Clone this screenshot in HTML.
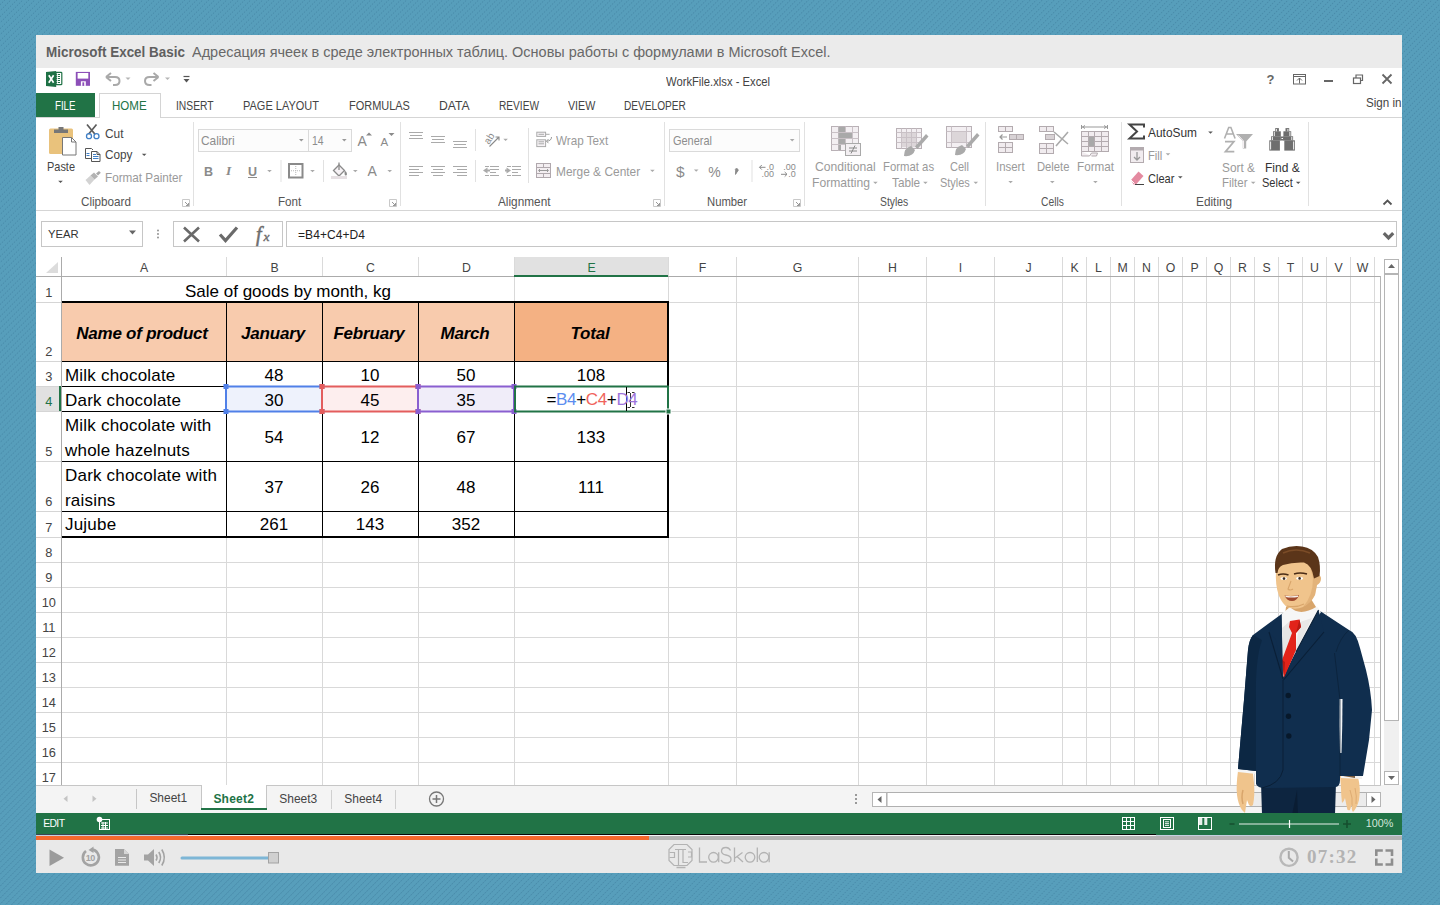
<!DOCTYPE html>
<html><head><meta charset="utf-8">
<style>
*{margin:0;padding:0;box-sizing:border-box}
html,body{width:1440px;height:905px;overflow:hidden}
body{background:repeating-linear-gradient(45deg,rgba(87,158,187,0) 0px,rgba(87,158,187,0) 1.2px,rgba(87,158,187,.85) 1.6px,rgba(87,158,187,.85) 2.5px,rgba(87,158,187,0) 2.83px),repeating-linear-gradient(135deg,#579ebb 0px,#579ebb 2.6px,#4a8cab 3.4px,#579ebb 4.24px);font-family:"Liberation Sans",sans-serif;position:relative;color:#000}
.a{position:absolute}
.t{position:absolute;white-space:nowrap;line-height:1}
svg{position:absolute;left:0;top:0;overflow:visible}
</style></head>
<body>
<!-- chrome -->
<div class="a" style="left:36px;top:35px;width:1366px;height:838px;background:#fff;"></div>
<div class="a" style="left:36px;top:35px;width:1366px;height:33px;background:#ebebeb;"></div>
<div class="t" style="top:44.00px;font-size:15.2px;color:#5f5f5f;font-weight:bold;left:46px;transform:scaleX(0.8847);transform-origin:0 0;">Microsoft Excel Basic</div>
<div class="t" style="top:44.00px;font-size:15.2px;color:#686868;left:192px;transform:scaleX(0.9526);transform-origin:0 0;">Адресация ячеек в среде электронных таблиц. Основы работы с формулами в Microsoft Excel.</div>
<div class="t" style="top:74.95px;font-size:13px;color:#444;left:666px;transform:scaleX(0.8639);transform-origin:0 0;">WorkFile.xlsx - Excel</div>
<div class="a" style="left:1360px;top:90px;width:42px;height:25px;overflow:hidden"><div class="t" style="top:7.28px;font-size:12.8px;color:#444;left:6px;transform:scaleX(0.9071);transform-origin:0 0;">Sign in</div>
</div><div class="a" style="left:36px;top:93px;width:59px;height:24px;background:#217346;"></div>
<div class="a" style="left:99px;top:93px;width:62px;height:25px;background:#fff;border:1px solid #d4d4d4;border-bottom:none;"></div>
<div class="t" style="top:99.31px;font-size:13.2px;color:#fff;left:55.2px;transform:scaleX(0.7354);transform-origin:0 0;">FILE</div>
<div class="t" style="top:99.31px;font-size:13.2px;color:#217346;left:112px;transform:scaleX(0.8763);transform-origin:0 0;">HOME</div>
<div class="t" style="top:99.31px;font-size:13.2px;color:#444;left:175.6px;transform:scaleX(0.7806);transform-origin:0 0;">INSERT</div>
<div class="t" style="top:99.31px;font-size:13.2px;color:#444;left:243.3px;transform:scaleX(0.8333);transform-origin:0 0;">PAGE LAYOUT</div>
<div class="t" style="top:99.31px;font-size:13.2px;color:#444;left:349px;transform:scaleX(0.8317);transform-origin:0 0;">FORMULAS</div>
<div class="t" style="top:99.31px;font-size:13.2px;color:#444;left:439.3px;transform:scaleX(0.9234);transform-origin:0 0;">DATA</div>
<div class="t" style="top:99.31px;font-size:13.2px;color:#444;left:499px;transform:scaleX(0.7681);transform-origin:0 0;">REVIEW</div>
<div class="t" style="top:99.31px;font-size:13.2px;color:#444;left:567.7px;transform:scaleX(0.8092);transform-origin:0 0;">VIEW</div>
<div class="t" style="top:99.31px;font-size:13.2px;color:#444;left:624px;transform:scaleX(0.7683);transform-origin:0 0;">DEVELOPER</div>
<div class="a" style="left:36px;top:117px;width:63px;height:1px;background:#d5d5d5;"></div>
<div class="a" style="left:161px;top:117px;width:1241px;height:1px;background:#d5d5d5;"></div>
<div class="a" style="left:36px;top:210px;width:1366px;height:1px;background:#d5d5d5;"></div>
<svg width="1440" height="120">
<g>
 <rect x="56" y="72.3" width="5.8" height="12.4" rx=".8" fill="#fff" stroke="#1e7145" stroke-width="1.2"/>
 <path d="M58 74.5h2M58 76.5h2M58 78.5h2M58 80.5h2M58 82.5h2" stroke="#1e7145" stroke-width="1.1"/>
 <path d="M46 71.9 L56.2 71 L56.2 86.9 L46 85.9 Z" fill="#1e7145"/>
 <path d="M56.2 74.5h1M56.2 76.5h1M56.2 78.5h1M56.2 80.5h1M56.2 82.5h1" stroke="#1e7145" stroke-width="1.1"/>
 <path d="M48.8 75.3 L53.6 82.7 M53.6 75.3 L48.8 82.7" stroke="#fff" stroke-width="1.7"/>
 <rect x="75.8" y="71.9" width="14.2" height="13.9" fill="#8c4fb8"/>
 <rect x="77.6" y="73" width="10.7" height="5.6" fill="#fff"/>
 <rect x="80.9" y="81.3" width="4.9" height="4.6" fill="#fff"/>
 <rect x="82.4" y="82.3" width="1.8" height="3.6" fill="#8c4fb8"/>
 <path d="M106 77 L111 73 M106 77 L111 81 M106 77 H115 Q119.5 77 119.5 81 Q119.5 85 115 85 H113" fill="none" stroke="#a9a9a9" stroke-width="2"/>
 <path d="M125.5 77.5h5l-2.5 2.5z" fill="#b5b5b5"/>
 <path d="M158.5 77 L153.5 73 M158.5 77 L153.5 81 M158.5 77 H149.5 Q145 77 145 81 Q145 85 149.5 85 H151.5" fill="none" stroke="#a9a9a9" stroke-width="2"/>
 <path d="M165 77.5h5l-2.5 2.5z" fill="#b5b5b5"/>
 <path d="M183.5 76.5h6" stroke="#555" stroke-width="1.2"/>
 <path d="M183.5 79h6l-3 3.5z" fill="#555"/>
</g>
<g fill="none" stroke="#666" stroke-width="1.5">
 <text x="1266.5" y="84" font-size="13" font-weight="bold" fill="#666" stroke="none" font-family="Liberation Sans">?</text>
 <rect x="1293.5" y="74.5" width="12" height="9.5" stroke-width="1"/>
 <path d="M1293.5 76.5h12" stroke-width="1"/>
 <path d="M1299.5 83.5v-5.5M1297 80.5l2.5-2.5 2.5 2.5" stroke-width="1"/>
 <path d="M1324 81h9" stroke-width="2"/>
 <rect x="1353.5" y="78" width="7" height="5.5" stroke-width="1.2"/>
 <path d="M1356 78v-3h6.5v5.5h-2" stroke-width="1.2"/>
 <path d="M1382.5 74.5l9 9M1391.5 74.5l-9 9" stroke-width="1.8"/>
</g>
</svg>
<!-- ribbon -->
<div class="a" style="left:193px;top:122px;width:1px;height:84px;background:#e1e1e1;"></div>
<div class="a" style="left:400px;top:122px;width:1px;height:84px;background:#e1e1e1;"></div>
<div class="a" style="left:664px;top:122px;width:1px;height:84px;background:#e1e1e1;"></div>
<div class="a" style="left:804px;top:122px;width:1px;height:84px;background:#e1e1e1;"></div>
<div class="a" style="left:985px;top:122px;width:1px;height:84px;background:#e1e1e1;"></div>
<div class="a" style="left:1121px;top:122px;width:1px;height:84px;background:#e1e1e1;"></div>
<div class="a" style="left:1308px;top:122px;width:1px;height:84px;background:#e1e1e1;"></div>
<div class="t" style="top:196.18px;font-size:12.8px;color:#555;left:81.4px;transform:scaleX(0.9127);transform-origin:0 0;">Clipboard</div>
<div class="t" style="top:196.18px;font-size:12.8px;color:#555;left:277.5px;transform:scaleX(0.9098);transform-origin:0 0;">Font</div>
<div class="t" style="top:196.18px;font-size:12.8px;color:#555;left:498.2px;transform:scaleX(0.9224);transform-origin:0 0;">Alignment</div>
<div class="t" style="top:196.18px;font-size:12.8px;color:#555;left:706.5px;transform:scaleX(0.8809);transform-origin:0 0;">Number</div>
<div class="t" style="top:196.18px;font-size:12.8px;color:#555;left:880.4px;transform:scaleX(0.8090);transform-origin:0 0;">Styles</div>
<div class="t" style="top:196.18px;font-size:12.8px;color:#555;left:1041.4px;transform:scaleX(0.8049);transform-origin:0 0;">Cells</div>
<div class="t" style="top:196.18px;font-size:12.8px;color:#555;left:1196.4px;transform:scaleX(0.9250);transform-origin:0 0;">Editing</div>
<div class="t" style="top:161.18px;font-size:12.8px;color:#444;left:47px;transform:scaleX(0.8555);transform-origin:0 0;">Paste</div>
<div class="t" style="top:128.18px;font-size:12.8px;color:#444;left:104.5px;transform:scaleX(0.9288);transform-origin:0 0;">Cut</div>
<div class="t" style="top:148.98px;font-size:12.8px;color:#444;left:104.5px;transform:scaleX(0.9203);transform-origin:0 0;">Copy</div>
<div class="t" style="top:171.98px;font-size:12.8px;color:#9a9a9a;left:104.5px;transform:scaleX(0.9156);transform-origin:0 0;">Format Painter</div>
<div class="a" style="left:198px;top:129px;width:111px;height:23px;background:#fcfcfc;border:1px solid #dadada;"></div>
<div class="a" style="left:308px;top:129px;width:44px;height:23px;background:#fcfcfc;border:1px solid #dadada;"></div>
<div class="t" style="top:134.58px;font-size:12.8px;color:#8d8d8d;left:201.3px;transform:scaleX(0.9290);transform-origin:0 0;">Calibri</div>
<div class="t" style="top:134.58px;font-size:12.8px;color:#8d8d8d;left:311.7px;transform:scaleX(0.8148);transform-origin:0 0;">14</div>
<div class="t" style="top:135.18px;font-size:12.8px;color:#9a9a9a;left:555.5px;transform:scaleX(0.9134);transform-origin:0 0;">Wrap Text</div>
<div class="t" style="top:166.28px;font-size:12.8px;color:#9a9a9a;left:555.5px;transform:scaleX(0.9320);transform-origin:0 0;">Merge &amp; Center</div>
<div class="a" style="left:669px;top:129px;width:131px;height:23px;background:#fcfcfc;border:1px solid #dadada;"></div>
<div class="t" style="top:134.78px;font-size:12.8px;color:#8d8d8d;left:672.6px;transform:scaleX(0.8565);transform-origin:0 0;">General</div>
<div class="t" style="top:160.78px;font-size:12.8px;color:#9a9a9a;left:814.7px;transform:scaleX(0.9478);transform-origin:0 0;">Conditional</div>
<div class="t" style="top:176.78px;font-size:12.8px;color:#9a9a9a;left:811.7px;transform:scaleX(0.9482);transform-origin:0 0;">Formatting</div>
<div class="t" style="top:160.78px;font-size:12.8px;color:#9a9a9a;left:883.4px;transform:scaleX(0.8870);transform-origin:0 0;">Format as</div>
<div class="t" style="top:176.78px;font-size:12.8px;color:#9a9a9a;left:891.9px;transform:scaleX(0.9184);transform-origin:0 0;">Table</div>
<div class="t" style="top:160.78px;font-size:12.8px;color:#9a9a9a;left:949.9px;transform:scaleX(0.8617);transform-origin:0 0;">Cell</div>
<div class="t" style="top:176.78px;font-size:12.8px;color:#9a9a9a;left:940px;transform:scaleX(0.8549);transform-origin:0 0;">Styles</div>
<div class="t" style="top:161.18px;font-size:12.8px;color:#9a9a9a;left:996px;transform:scaleX(0.8935);transform-origin:0 0;">Insert</div>
<div class="t" style="top:161.18px;font-size:12.8px;color:#9a9a9a;left:1036.5px;transform:scaleX(0.8784);transform-origin:0 0;">Delete</div>
<div class="t" style="top:161.18px;font-size:12.8px;color:#9a9a9a;left:1076.6px;transform:scaleX(0.9153);transform-origin:0 0;">Format</div>
<div class="t" style="top:127.48px;font-size:12.8px;color:#333;left:1148.4px;transform:scaleX(0.9307);transform-origin:0 0;">AutoSum</div>
<div class="t" style="top:150.28px;font-size:12.8px;color:#9a9a9a;left:1148.4px;transform:scaleX(0.8746);transform-origin:0 0;">Fill</div>
<div class="t" style="top:172.78px;font-size:12.8px;color:#333;left:1148.4px;transform:scaleX(0.8631);transform-origin:0 0;">Clear</div>
<div class="t" style="top:161.78px;font-size:12.8px;color:#9a9a9a;left:1222.2px;transform:scaleX(0.9250);transform-origin:0 0;">Sort &amp;</div>
<div class="t" style="top:177.28px;font-size:12.8px;color:#9a9a9a;left:1222.2px;transform:scaleX(0.8966);transform-origin:0 0;">Filter</div>
<div class="t" style="top:161.78px;font-size:12.8px;color:#333;left:1264.5px;transform:scaleX(0.9380);transform-origin:0 0;">Find &amp;</div>
<div class="t" style="top:177.28px;font-size:12.8px;color:#333;left:1262px;transform:scaleX(0.8630);transform-origin:0 0;">Select</div>
<svg width="1440" height="220">
<path d="M58.2 180.8h4.6l-2.3 2.3z" fill="#555"/><path d="M141.89999999999998 153.8h4.6l-2.3 2.3z" fill="#555"/><path d="M299.0 139.10000000000002h4.6l-2.3 2.3z" fill="#999"/><path d="M342.0 139.10000000000002h4.6l-2.3 2.3z" fill="#999"/><path d="M267.2 170.0h4.6l-2.3 2.3z" fill="#aaa"/><path d="M310.2 170.0h4.6l-2.3 2.3z" fill="#aaa"/><path d="M353.0 170.0h4.6l-2.3 2.3z" fill="#aaa"/><path d="M387.4 170.0h4.6l-2.3 2.3z" fill="#aaa"/><path d="M503.3 138.8h4.6l-2.3 2.3z" fill="#aaa"/><path d="M650.1 169.8h4.6l-2.3 2.3z" fill="#aaa"/><path d="M789.9000000000001 139.10000000000002h4.6l-2.3 2.3z" fill="#aaa"/><path d="M693.9000000000001 169.5h4.6l-2.3 2.3z" fill="#aaa"/><path d="M873.1 181.8h4.6l-2.3 2.3z" fill="#aaa"/><path d="M923.1 181.8h4.6l-2.3 2.3z" fill="#aaa"/><path d="M973.5 181.8h4.6l-2.3 2.3z" fill="#aaa"/><path d="M1008.3000000000001 181.0h4.6l-2.3 2.3z" fill="#aaa"/><path d="M1050.0 181.0h4.6l-2.3 2.3z" fill="#aaa"/><path d="M1093.1000000000001 181.0h4.6l-2.3 2.3z" fill="#aaa"/><path d="M1208.2 131.4h4.6l-2.3 2.3z" fill="#555"/><path d="M1165.7 153.3h4.6l-2.3 2.3z" fill="#aaa"/><path d="M1178.0 176.3h4.6l-2.3 2.3z" fill="#555"/><path d="M1250.9 181.8h4.6l-2.3 2.3z" fill="#aaa"/><path d="M1295.9 181.8h4.6l-2.3 2.3z" fill="#555"/><path d="M182.5 206.5v-7h7v7z" fill="none" stroke="#c9c9c9" stroke-width="1"/><path d="M185 202l3.5 3.5M188.5 203v2.5h-2.5" stroke="#999" stroke-width="1" fill="none"/><path d="M389.5 206.5v-7h7v7z" fill="none" stroke="#c9c9c9" stroke-width="1"/><path d="M392 202l3.5 3.5M395.5 203v2.5h-2.5" stroke="#999" stroke-width="1" fill="none"/><path d="M653.5 206.5v-7h7v7z" fill="none" stroke="#c9c9c9" stroke-width="1"/><path d="M656 202l3.5 3.5M659.5 203v2.5h-2.5" stroke="#999" stroke-width="1" fill="none"/><path d="M793.5 206.5v-7h7v7z" fill="none" stroke="#c9c9c9" stroke-width="1"/><path d="M796 202l3.5 3.5M799.5 203v2.5h-2.5" stroke="#999" stroke-width="1" fill="none"/><path d="M1383.5 204.5l4-4 4 4" fill="none" stroke="#555" stroke-width="1.8"/><rect x="49" y="128.5" width="24" height="25.5" rx="1.5" fill="#e9c27c"/><path d="M54 133h14v-3.5h-4.5v-2.5h-5v2.5h-4.5z" fill="#777"/><path d="M62.5 137.5h9l4.5 4.5v13h-13.5z" fill="#fff" stroke="#777" stroke-width="1"/><path d="M71.5 137.5v4.5h4.5" fill="none" stroke="#777" stroke-width="1"/><path d="M87 124.5l8 9.8M96.5 124.5l-8 9.8" stroke="#5c5c5c" stroke-width="1.7"/><circle cx="89" cy="136.2" r="2.5" fill="none" stroke="#3f7fc6" stroke-width="1.3"/><circle cx="96.5" cy="136.2" r="2.5" fill="none" stroke="#3f7fc6" stroke-width="1.3"/><path d="M91.5 158.5h-6v-10h6l1.5 1.5" fill="none" stroke="#555" stroke-width="1"/><path d="M86.5 153.5h3M86.5 155.5h3" stroke="#3f7fc6" stroke-width="1"/><path d="M91.5 151.5h5.5l3 3v7h-8.5z" fill="#fff" stroke="#555" stroke-width="1"/><path d="M97 151.5v3h3" fill="none" stroke="#555" stroke-width="1"/><path d="M93 154.5h3M93 156.5h5.5M93 158.5h5.5" stroke="#3f7fc6" stroke-width="1"/><path d="M85.5 180l5-4.5 4 4 -5 5.5z" fill="#d3d3d3"/><path d="M90.5 175.5l3.5-3 4 4-3.5 3z" fill="#b3b3b3"/><path d="M96 173.5l3-2.5 1.8 1.8-2.8 2.7z" fill="#a8a8a8"/><text x="357.5" y="146" font-size="14" fill="#8a8a8a" font-family="Liberation Sans">A</text><path d="M366 135.5l3-3 3 3z" fill="#8a8a8a"/><text x="380.5" y="146" font-size="11.5" fill="#8a8a8a" font-family="Liberation Sans">A</text><path d="M388.5 133l3 3 3-3z" fill="#8a8a8a"/><text x="204" y="175.5" font-size="12.5" font-weight="bold" fill="#8a8a8a" font-family="Liberation Sans">B</text><text x="226" y="175.3" font-size="13.5" font-style="italic" font-weight="bold" fill="#8a8a8a" font-family="Liberation Serif">I</text><text x="248" y="175.5" font-size="12.5" font-weight="bold" fill="#8a8a8a" font-family="Liberation Sans">U</text><path d="M248 177.5h9" stroke="#8a8a8a" stroke-width="1"/><rect x="280.5" y="160" width="1" height="22" fill="#e1e1e1"/><rect x="323" y="160" width="1" height="22" fill="#e1e1e1"/><rect x="289" y="164" width="13.5" height="13.5" fill="none" stroke="#8a8a8a" stroke-width="2"/><path d="M295.75 166v10M291 170.75h10" stroke="#b8b8b8" stroke-width="1" stroke-dasharray="1 1"/><path d="M333.5 170.5l5.5-5.5 5.5 5.5-5.5 5.5z" fill="#f6f2f5" stroke="#8a8a8a" stroke-width="1.3"/><path d="M339 170v-7.5" stroke="#8a8a8a" stroke-width="1.3"/><path d="M344.5 170.5q2.5 1 2.5 3.5q0 1.5 -1.2 1.5q-1.2 0 -1.2-1.5z" fill="#8a8a8a"/><rect x="331" y="176" width="16" height="3" fill="#e6e0e3"/><text x="367.5" y="175.5" font-size="14" fill="#8a8a8a" font-family="Liberation Sans">A</text><path d="M409 132.5h14" stroke="#aaa" stroke-width="1"/><path d="M410 135.5h12" stroke="#aaa" stroke-width="1"/><path d="M409 138.5h14" stroke="#aaa" stroke-width="1"/><path d="M431 136.5h14" stroke="#aaa" stroke-width="1"/><path d="M432 139.5h12" stroke="#aaa" stroke-width="1"/><path d="M431 142.5h14" stroke="#aaa" stroke-width="1"/><path d="M453 141.5h14" stroke="#aaa" stroke-width="1"/><path d="M454 144.5h12" stroke="#aaa" stroke-width="1"/><path d="M453 147.5h14" stroke="#aaa" stroke-width="1"/><path d="M409 166.5h14" stroke="#aaa" stroke-width="1"/><path d="M409 169.5h10" stroke="#aaa" stroke-width="1"/><path d="M409 172.5h14" stroke="#aaa" stroke-width="1"/><path d="M409 175.5h10" stroke="#aaa" stroke-width="1"/><path d="M431 166.5h14" stroke="#aaa" stroke-width="1"/><path d="M433 169.5h10" stroke="#aaa" stroke-width="1"/><path d="M431 172.5h14" stroke="#aaa" stroke-width="1"/><path d="M433 175.5h10" stroke="#aaa" stroke-width="1"/><path d="M453 166.5h14" stroke="#aaa" stroke-width="1"/><path d="M457 169.5h10" stroke="#aaa" stroke-width="1"/><path d="M453 172.5h14" stroke="#aaa" stroke-width="1"/><path d="M457 175.5h10" stroke="#aaa" stroke-width="1"/><rect x="475" y="129" width="1" height="22" fill="#e1e1e1"/><rect x="475" y="160" width="1" height="22" fill="#e1e1e1"/><rect x="528" y="128" width="1" height="55" fill="#e1e1e1"/><text x="0" y="0" font-size="10" fill="#8a8a8a" font-family="Liberation Sans" transform="translate(489 145) rotate(-58)">ab</text><path d="M489.5 146.5l9-9M495.5 137h3.5v3.5" stroke="#8a8a8a" stroke-width="1.1" fill="none"/><path d="M485 166.5h4" stroke="#aaa" stroke-width="1"/><path d="M485 175.5h4" stroke="#aaa" stroke-width="1"/><path d="M490 166.5h9" stroke="#aaa" stroke-width="1"/><path d="M490 169.5h9" stroke="#aaa" stroke-width="1"/><path d="M490 172.5h6" stroke="#aaa" stroke-width="1"/><path d="M490 175.5h9" stroke="#aaa" stroke-width="1"/><path d="M483 170.5l4.5-3v6z" fill="#aaa"/><path d="M487 170.5h3" stroke="#aaa" stroke-width="2"/><path d="M507 166.5h4" stroke="#aaa" stroke-width="1"/><path d="M507 175.5h4" stroke="#aaa" stroke-width="1"/><path d="M512 166.5h9" stroke="#aaa" stroke-width="1"/><path d="M512 169.5h9" stroke="#aaa" stroke-width="1"/><path d="M512 172.5h6" stroke="#aaa" stroke-width="1"/><path d="M512 175.5h9" stroke="#aaa" stroke-width="1"/><path d="M511 170.5l-4.5-3v6z" fill="#aaa"/><path d="M505 170.5h3" stroke="#aaa" stroke-width="2"/><rect x="536.8" y="132.2" width="8.8" height="4.2" fill="#f6f2f5" stroke="#aaa" stroke-width="1"/><path d="M538.5 134.3h5.5M545.6 134.3h4" stroke="#aaa" stroke-width="1"/><rect x="536.8" y="139.8" width="8.8" height="6.8" fill="#f6f2f5" stroke="#aaa" stroke-width="1"/><path d="M538.5 141.8h5.5M538.5 143.8h5.5" stroke="#aaa" stroke-width="1"/><path d="M551.5 137q0 4 -5 4.2M548.5 139l-2 2.2 2 2" fill="none" stroke="#999" stroke-width="1"/><rect x="536.5" y="163.5" width="14" height="14" fill="#f3eef1" stroke="#b0a8ad" stroke-width="1"/><path d="M536.5 167.5h14M536.5 173.5h14M543.5 163.5v4M543.5 173.5v4" stroke="#b0a8ad" stroke-width="1"/><path d="M539 170.5h9M540 169l-1.5 1.5 1.5 1.5M547 169l1.5 1.5-1.5 1.5" stroke="#999" stroke-width="1" fill="none"/><text x="676" y="177.2" font-size="15.5" fill="#8a8a8a" font-family="Liberation Sans">$</text><text x="708.3" y="177" font-size="14" fill="#8a8a8a" font-family="Liberation Sans">%</text><path d="M735.2 169.3a1.6 1.6 0 1 1 1.8 2.4q-.3 2 -2 2.8" fill="#8a8a8a" stroke="#8a8a8a" stroke-width="1"/><rect x="751.5" y="160" width="1" height="22" fill="#e1e1e1"/><text x="766.5" y="170.3" font-size="9" fill="#8a8a8a" font-family="Liberation Sans">.0</text><text x="761.5" y="177.3" font-size="9" fill="#8a8a8a" font-family="Liberation Sans">.00</text><path d="M759.5 167.3h6M761.8 165l-2.3 2.3 2.3 2.3" stroke="#8a8a8a" stroke-width="1" fill="none"/><text x="783.3" y="170.3" font-size="9" fill="#8a8a8a" font-family="Liberation Sans">.00</text><text x="788.3" y="177.3" font-size="9" fill="#8a8a8a" font-family="Liberation Sans">.0</text><path d="M781 174.3h6M784.7 172l2.3 2.3-2.3 2.3" stroke="#8a8a8a" stroke-width="1" fill="none"/><rect x="831.5" y="126.5" width="27" height="24" fill="#f3eff2" stroke="#b9b1b6" stroke-width="1"/><path d="M831.5 132.5h27M831.5 138.5h27M831.5 144.5h27M838.5 126.5v24M845.5 126.5v24M852.5 126.5v24" stroke="#c9c1c6" stroke-width="1"/><path d="M838.5 127h6.5v5h-6.5zM838.5 133h13.5v5h-13.5zM838.5 139h6.5v5h-6.5zM838.5 145h2.5v5h-2.5z" fill="#a9a9a9"/><rect x="845.5" y="143.5" width="15" height="12" fill="#f3eff2" stroke="#a9a9a9" stroke-width="1"/><path d="M849 148h8M849 151h8M851 153.5l4-8" stroke="#888" stroke-width="1"/><rect x="896.5" y="128.5" width="25" height="20" fill="#f3eff2" stroke="#b9b1b6" stroke-width="1"/><rect x="902" y="133" width="14" height="14" fill="#dcd6d9"/><path d="M896.5 132.5h25M896.5 137.5h25M896.5 142.5h25M901.5 128.5v20M906.5 128.5v20M911.5 128.5v20M916.5 128.5v20" stroke="#c9c1c6" stroke-width="1"/><path d="M926 134l-11 12.5 2.5 2.5 11-12.5z" fill="#aaa"/><path d="M904 156q0-8 7-10l4 4q-2 7 -11 6z" fill="#aaa"/><rect x="946.5" y="126.5" width="25" height="21" fill="#f3eff2" stroke="#b9b1b6" stroke-width="1"/><rect x="951" y="131" width="16" height="12" fill="#dcd6d9"/><path d="M946.5 131.5h25M946.5 142.5h25M951.5 126.5v21M966.5 126.5v21" stroke="#c9c1c6" stroke-width="1"/><path d="M977 133l-11 12.5 2.5 2.5 11-12.5z" fill="#aaa"/><path d="M955 155q0-8 7-10l4 4q-2 7 -11 6z" fill="#aaa"/><rect x="998.5" y="126.5" width="14" height="5" fill="#f1ecef" stroke="#b3abaf"/><path d="M1005.5 126.5v5" stroke="#b3abaf"/><rect x="1009.5" y="134.5" width="14" height="5" fill="#d8d2d5" stroke="#b3abaf"/><path d="M1016.5 134.5v5" stroke="#b3abaf"/><path d="M1000 137h7M1002.5 134.5l-2.5 2.5 2.5 2.5" stroke="#999" stroke-width="1.2" fill="none"/><rect x="998.5" y="142.5" width="14" height="10" fill="#f1ecef" stroke="#b3abaf"/><path d="M998.5 147.5h14M1005.5 142.5v10" stroke="#b3abaf"/><rect x="1039.5" y="126.5" width="14" height="5" fill="#f1ecef" stroke="#b3abaf"/><path d="M1046.5 126.5v5" stroke="#b3abaf"/><rect x="1045.5" y="134.5" width="9" height="5" fill="#d8d2d5" stroke="#b3abaf"/><rect x="1039.5" y="143.5" width="14" height="10" fill="#f1ecef" stroke="#b3abaf"/><path d="M1039.5 148.5h14M1046.5 143.5v10" stroke="#b3abaf"/><path d="M1054 132l14 12M1068 132l-12 14" stroke="#aaa" stroke-width="1.6"/><path d="M1081.5 125v4M1107.5 125v4M1082 127h25M1085 125.5l-2.5 1.5 2.5 1.5M1104 125.5l2.5 1.5-2.5 1.5" stroke="#999" stroke-width="1" fill="none"/><rect x="1081.5" y="131.5" width="27" height="20" fill="#f1ecef" stroke="#b3abaf"/><path d="M1081.5 136.5h27M1081.5 141.5h27M1081.5 146.5h27M1088.5 131.5v20M1094.5 131.5v20M1101.5 131.5v20" stroke="#b3abaf"/><rect x="1089" y="137" width="5" height="9" fill="#a9a9a9"/><path d="M1081.5 151.5v4.5h8l2-3h6l-1 3h-5" fill="#f1ecef" stroke="#b3abaf"/><path d="M1144 127.5v-3h-14.5l7.5 7-7.5 7h14.5v-3" fill="none" stroke="#444" stroke-width="2"/><rect x="1130.5" y="147.5" width="13" height="15" fill="#f1ecef" stroke="#b3abaf"/><rect x="1130.5" y="147.5" width="13" height="3" fill="#b3abaf"/><path d="M1137 152v8M1134 157l3 3 3-3" stroke="#999" stroke-width="1.3" fill="none"/><path d="M1131 180l7.5-8.5 5 4.5-7.5 8.5h-2.5z" fill="#e48aa0"/><path d="M1131 180l3.5 3.5" stroke="#fff" stroke-width="1"/><path d="M1135 184.5h9" stroke="#444" stroke-width="1"/><path d="M1224.5 138.5l4.2-11h2.2l4.2 11M1226.5 134h6.5" fill="none" stroke="#b0b0b0" stroke-width="1.6"/><path d="M1225 141.7h8.8l-8.3 10h8.8" fill="none" stroke="#b0b0b0" stroke-width="1.8"/><path d="M1236 134h17l-6.8 7.5v7h-3.4v-7.5z" fill="#b0b0b0"/><path d="M1238.5 135.5l5 5.5v7" fill="none" stroke="#f4eff2" stroke-width="1"/><rect x="1275.2" y="128.1" width="3.7" height="3.5" fill="#6e6e6e"/><rect x="1273" y="131.3" width="7.8" height="5.2" fill="#6e6e6e"/><rect x="1271.1" y="136.3" width="9.7" height="4.2" fill="#6e6e6e"/><rect x="1269.3" y="140.3" width="10.6" height="10.3" fill="#6e6e6e"/><rect x="1285.5" y="128.1" width="3.7" height="3.5" fill="#6e6e6e"/><rect x="1283.4" y="131.3" width="7.8" height="5.2" fill="#6e6e6e"/><rect x="1283.4" y="136.3" width="9.7" height="4.2" fill="#6e6e6e"/><rect x="1284.3" y="140.3" width="10.6" height="10.3" fill="#6e6e6e"/><rect x="1280.5" y="136.5" width="3.4" height="4" fill="#6e6e6e"/><rect x="1281.5" y="138" width="1.5" height="1" fill="#fff"/><path d="M1270.6 141.5v8M1272.4 137v3M1274.3 132v4M1276.4 129v2.3M1293.6 141.5v8M1291.8 137v3M1289.9 132v4M1287.9 129v2.3" stroke="#fff" stroke-width=".9"/></svg>
<!-- formula -->
<div class="a" style="left:41px;top:221px;width:102px;height:26px;background:#fff;border:1px solid #c6c6c6;"></div>
<div class="t" style="top:229.22px;font-size:11.27px;color:#333;letter-spacing:0.003px;left:48px;">YEAR</div>
<div class="a" style="left:173px;top:221px;width:110px;height:26px;background:#fff;border:1px solid #c6c6c6;"></div>
<div class="a" style="left:286px;top:221px;width:1111px;height:26px;background:#fff;border:1px solid #c6c6c6;"></div>
<div class="t" style="top:229.10px;font-size:12px;color:#222;letter-spacing:0.077px;left:298px;">=B4+C4+D4</div>
<svg width="1440" height="260"><path d="M129 230.5h7l-3.5 4z" fill="#666"/><circle cx="158" cy="230.5" r=".9" fill="#888"/><circle cx="158" cy="234" r=".9" fill="#888"/><circle cx="158" cy="237.5" r=".9" fill="#888"/><path d="M184 227.5l15 14M199 227.5l-15 14" stroke="#6a6a6a" stroke-width="2.6"/><path d="M220 234.5l5.5 6 11.5-13" fill="none" stroke="#6a6a6a" stroke-width="3.2"/><text x="256" y="240.5" font-size="20" font-style="italic" font-family="Liberation Serif" fill="#6e6e6e" stroke="#6e6e6e" stroke-width=".5">f</text><text x="263.5" y="240.8" font-size="13.5" font-style="italic" font-family="Liberation Serif" fill="#6e6e6e" stroke="#6e6e6e" stroke-width=".4">x</text><path d="M1383.8 233.2l4.7 4.7 4.7-4.7" fill="none" stroke="#666" stroke-width="3.2"/></svg>
<!-- grid -->
<div class="a" style="left:514px;top:257px;width:154px;height:19px;background:#e1e1e1;"></div>
<div class="a" style="left:36px;top:386px;width:25px;height:25px;background:#e1e1e1;"></div>
<div class="a" style="left:62px;top:303px;width:164px;height:58px;background:#f8cbad;"></div>
<div class="a" style="left:227px;top:303px;width:95px;height:58px;background:#f8cbad;"></div>
<div class="a" style="left:323px;top:303px;width:95px;height:58px;background:#f8cbad;"></div>
<div class="a" style="left:419px;top:303px;width:95px;height:58px;background:#f8cbad;"></div>
<div class="a" style="left:515px;top:303px;width:152px;height:58px;background:#f4b183;"></div>
<div class="a" style="left:227px;top:387px;width:95px;height:24px;background:#eef2fc;"></div>
<div class="a" style="left:323px;top:387px;width:95px;height:24px;background:#fdeeee;"></div>
<div class="a" style="left:419px;top:387px;width:95px;height:24px;background:#f0edf9;"></div>
<svg width="1440" height="905">
<rect x="226" y="257" width="1" height="19" fill="#dadada"/><rect x="322" y="257" width="1" height="19" fill="#dadada"/><rect x="418" y="257" width="1" height="19" fill="#dadada"/><rect x="514" y="257" width="1" height="19" fill="#dadada"/><rect x="668" y="257" width="1" height="19" fill="#dadada"/><rect x="736" y="257" width="1" height="19" fill="#dadada"/><rect x="858" y="257" width="1" height="19" fill="#dadada"/><rect x="926" y="257" width="1" height="19" fill="#dadada"/><rect x="994" y="257" width="1" height="19" fill="#dadada"/><rect x="1062" y="257" width="1" height="19" fill="#dadada"/><rect x="1086" y="257" width="1" height="19" fill="#dadada"/><rect x="1110" y="257" width="1" height="19" fill="#dadada"/><rect x="1134" y="257" width="1" height="19" fill="#dadada"/><rect x="1158" y="257" width="1" height="19" fill="#dadada"/><rect x="1182" y="257" width="1" height="19" fill="#dadada"/><rect x="1206" y="257" width="1" height="19" fill="#dadada"/><rect x="1230" y="257" width="1" height="19" fill="#dadada"/><rect x="1254" y="257" width="1" height="19" fill="#dadada"/><rect x="1278" y="257" width="1" height="19" fill="#dadada"/><rect x="1302" y="257" width="1" height="19" fill="#dadada"/><rect x="1326" y="257" width="1" height="19" fill="#dadada"/><rect x="1350" y="257" width="1" height="19" fill="#dadada"/><rect x="1374" y="257" width="1" height="19" fill="#dadada"/><rect x="226" y="277" width="1" height="508" fill="#d9d9d9"/><rect x="322" y="277" width="1" height="508" fill="#d9d9d9"/><rect x="418" y="277" width="1" height="508" fill="#d9d9d9"/><rect x="514" y="277" width="1" height="508" fill="#d9d9d9"/><rect x="668" y="277" width="1" height="508" fill="#d9d9d9"/><rect x="736" y="277" width="1" height="508" fill="#d9d9d9"/><rect x="858" y="277" width="1" height="508" fill="#d9d9d9"/><rect x="926" y="277" width="1" height="508" fill="#d9d9d9"/><rect x="994" y="277" width="1" height="508" fill="#d9d9d9"/><rect x="1062" y="277" width="1" height="508" fill="#d9d9d9"/><rect x="1086" y="277" width="1" height="508" fill="#d9d9d9"/><rect x="1110" y="277" width="1" height="508" fill="#d9d9d9"/><rect x="1134" y="277" width="1" height="508" fill="#d9d9d9"/><rect x="1158" y="277" width="1" height="508" fill="#d9d9d9"/><rect x="1182" y="277" width="1" height="508" fill="#d9d9d9"/><rect x="1206" y="277" width="1" height="508" fill="#d9d9d9"/><rect x="1230" y="277" width="1" height="508" fill="#d9d9d9"/><rect x="1254" y="277" width="1" height="508" fill="#d9d9d9"/><rect x="1278" y="277" width="1" height="508" fill="#d9d9d9"/><rect x="1302" y="277" width="1" height="508" fill="#d9d9d9"/><rect x="1326" y="277" width="1" height="508" fill="#d9d9d9"/><rect x="1350" y="277" width="1" height="508" fill="#d9d9d9"/><rect x="1374" y="277" width="1" height="508" fill="#d9d9d9"/><rect x="1380" y="276" width="1" height="509" fill="#b4b4b4"/><rect x="62" y="302" width="1318" height="1" fill="#d9d9d9"/><rect x="36" y="302" width="25" height="1" fill="#d5d5d5"/><rect x="62" y="361" width="1318" height="1" fill="#d9d9d9"/><rect x="36" y="361" width="25" height="1" fill="#d5d5d5"/><rect x="62" y="386" width="1318" height="1" fill="#d9d9d9"/><rect x="36" y="386" width="25" height="1" fill="#d5d5d5"/><rect x="62" y="411" width="1318" height="1" fill="#d9d9d9"/><rect x="36" y="411" width="25" height="1" fill="#d5d5d5"/><rect x="62" y="461" width="1318" height="1" fill="#d9d9d9"/><rect x="36" y="461" width="25" height="1" fill="#d5d5d5"/><rect x="62" y="511" width="1318" height="1" fill="#d9d9d9"/><rect x="36" y="511" width="25" height="1" fill="#d5d5d5"/><rect x="62" y="537" width="1318" height="1" fill="#d9d9d9"/><rect x="36" y="537" width="25" height="1" fill="#d5d5d5"/><rect x="62" y="562" width="1318" height="1" fill="#d9d9d9"/><rect x="36" y="562" width="25" height="1" fill="#d5d5d5"/><rect x="62" y="587" width="1318" height="1" fill="#d9d9d9"/><rect x="36" y="587" width="25" height="1" fill="#d5d5d5"/><rect x="62" y="612" width="1318" height="1" fill="#d9d9d9"/><rect x="36" y="612" width="25" height="1" fill="#d5d5d5"/><rect x="62" y="637" width="1318" height="1" fill="#d9d9d9"/><rect x="36" y="637" width="25" height="1" fill="#d5d5d5"/><rect x="62" y="662" width="1318" height="1" fill="#d9d9d9"/><rect x="36" y="662" width="25" height="1" fill="#d5d5d5"/><rect x="62" y="687" width="1318" height="1" fill="#d9d9d9"/><rect x="36" y="687" width="25" height="1" fill="#d5d5d5"/><rect x="62" y="712" width="1318" height="1" fill="#d9d9d9"/><rect x="36" y="712" width="25" height="1" fill="#d5d5d5"/><rect x="62" y="737" width="1318" height="1" fill="#d9d9d9"/><rect x="36" y="737" width="25" height="1" fill="#d5d5d5"/><rect x="62" y="762" width="1318" height="1" fill="#d9d9d9"/><rect x="36" y="762" width="25" height="1" fill="#d5d5d5"/><rect x="62" y="277" width="452" height="24" fill="#fff"/><rect x="36" y="276" width="1344" height="1" fill="#ababab"/><rect x="61" y="257" width="1" height="528" fill="#ababab"/><path d="M46 273h12v-11z" fill="#dcdcdc"/><rect x="226" y="301" width="1" height="236" fill="#000"/><rect x="322" y="301" width="1" height="236" fill="#000"/><rect x="418" y="301" width="1" height="236" fill="#000"/><rect x="514" y="301" width="1" height="236" fill="#000"/><rect x="667" y="301" width="2" height="237" fill="#000"/><rect x="62" y="301" width="607" height="2" fill="#000"/><rect x="62" y="361" width="606" height="1" fill="#000"/><rect x="62" y="386" width="606" height="1" fill="#000"/><rect x="62" y="411" width="606" height="1" fill="#000"/><rect x="62" y="461" width="606" height="1" fill="#000"/><rect x="62" y="511" width="606" height="1" fill="#000"/><rect x="62" y="536" width="607" height="2" fill="#000"/><rect x="514" y="275" width="154" height="2" fill="#217346"/><rect x="59" y="386" width="2" height="25" fill="#217346"/><rect x="226" y="386.5" width="96" height="25" fill="none" stroke="#5080e8" stroke-width="2"/><rect x="223.5" y="384.0" width="5" height="5" fill="#5080e8"/><rect x="319.5" y="384.0" width="5" height="5" fill="#5080e8"/><rect x="223.5" y="409.0" width="5" height="5" fill="#5080e8"/><rect x="319.5" y="409.0" width="5" height="5" fill="#5080e8"/><rect x="322" y="386.5" width="96" height="25" fill="none" stroke="#e35d5d" stroke-width="2"/><rect x="319.5" y="384.0" width="5" height="5" fill="#e35d5d"/><rect x="415.5" y="384.0" width="5" height="5" fill="#e35d5d"/><rect x="319.5" y="409.0" width="5" height="5" fill="#e35d5d"/><rect x="415.5" y="409.0" width="5" height="5" fill="#e35d5d"/><rect x="418" y="386.5" width="96" height="25" fill="none" stroke="#8a5fd0" stroke-width="2"/><rect x="415.5" y="384.0" width="5" height="5" fill="#8a5fd0"/><rect x="511.5" y="384.0" width="5" height="5" fill="#8a5fd0"/><rect x="415.5" y="409.0" width="5" height="5" fill="#8a5fd0"/><rect x="511.5" y="409.0" width="5" height="5" fill="#8a5fd0"/><rect x="515" y="386.5" width="153" height="25" fill="none" stroke="#217346" stroke-width="2"/><rect x="666" y="409" width="5" height="5" fill="#217346" stroke="#fff" stroke-width="1"/><rect x="626" y="387" width="1" height="24" fill="#000"/><path d="M627.5 392.5h2.5M632 392.5h2.5M630.5 393v14M627.5 407.5h2.5M632 407.5h2.5" stroke="#333" stroke-width="1" fill="none"/></svg>
<div class="t" style="top:262.06px;font-size:12.3px;color:#444;left:-256.0px;width:800px;text-align:center;">A</div>
<div class="t" style="top:262.06px;font-size:12.3px;color:#444;left:-125.5px;width:800px;text-align:center;">B</div>
<div class="t" style="top:262.06px;font-size:12.3px;color:#444;left:-29.5px;width:800px;text-align:center;">C</div>
<div class="t" style="top:262.06px;font-size:12.3px;color:#444;left:66.5px;width:800px;text-align:center;">D</div>
<div class="t" style="top:262.06px;font-size:12.3px;color:#217346;left:191.5px;width:800px;text-align:center;">E</div>
<div class="t" style="top:262.06px;font-size:12.3px;color:#444;left:302.5px;width:800px;text-align:center;">F</div>
<div class="t" style="top:262.06px;font-size:12.3px;color:#444;left:397.5px;width:800px;text-align:center;">G</div>
<div class="t" style="top:262.06px;font-size:12.3px;color:#444;left:492.5px;width:800px;text-align:center;">H</div>
<div class="t" style="top:262.06px;font-size:12.3px;color:#444;left:560.5px;width:800px;text-align:center;">I</div>
<div class="t" style="top:262.06px;font-size:12.3px;color:#444;left:628.5px;width:800px;text-align:center;">J</div>
<div class="t" style="top:262.06px;font-size:12.3px;color:#444;left:674.5px;width:800px;text-align:center;">K</div>
<div class="t" style="top:262.06px;font-size:12.3px;color:#444;left:698.5px;width:800px;text-align:center;">L</div>
<div class="t" style="top:262.06px;font-size:12.3px;color:#444;left:722.5px;width:800px;text-align:center;">M</div>
<div class="t" style="top:262.06px;font-size:12.3px;color:#444;left:746.5px;width:800px;text-align:center;">N</div>
<div class="t" style="top:262.06px;font-size:12.3px;color:#444;left:770.5px;width:800px;text-align:center;">O</div>
<div class="t" style="top:262.06px;font-size:12.3px;color:#444;left:794.5px;width:800px;text-align:center;">P</div>
<div class="t" style="top:262.06px;font-size:12.3px;color:#444;left:818.5px;width:800px;text-align:center;">Q</div>
<div class="t" style="top:262.06px;font-size:12.3px;color:#444;left:842.5px;width:800px;text-align:center;">R</div>
<div class="t" style="top:262.06px;font-size:12.3px;color:#444;left:866.5px;width:800px;text-align:center;">S</div>
<div class="t" style="top:262.06px;font-size:12.3px;color:#444;left:890.5px;width:800px;text-align:center;">T</div>
<div class="t" style="top:262.06px;font-size:12.3px;color:#444;left:914.5px;width:800px;text-align:center;">U</div>
<div class="t" style="top:262.06px;font-size:12.3px;color:#444;left:938.5px;width:800px;text-align:center;">V</div>
<div class="t" style="top:262.06px;font-size:12.3px;color:#444;left:962.5px;width:800px;text-align:center;">W</div>
<div class="t" style="top:287.08px;font-size:12.8px;color:#444;left:-351.2px;width:800px;text-align:center;">1</div>
<div class="t" style="top:346.08px;font-size:12.8px;color:#444;left:-351.2px;width:800px;text-align:center;">2</div>
<div class="t" style="top:371.08px;font-size:12.8px;color:#444;left:-351.2px;width:800px;text-align:center;">3</div>
<div class="t" style="top:396.08px;font-size:12.8px;color:#217346;left:-351.2px;width:800px;text-align:center;">4</div>
<div class="t" style="top:446.08px;font-size:12.8px;color:#444;left:-351.2px;width:800px;text-align:center;">5</div>
<div class="t" style="top:496.08px;font-size:12.8px;color:#444;left:-351.2px;width:800px;text-align:center;">6</div>
<div class="t" style="top:522.08px;font-size:12.8px;color:#444;left:-351.2px;width:800px;text-align:center;">7</div>
<div class="t" style="top:547.08px;font-size:12.8px;color:#444;left:-351.2px;width:800px;text-align:center;">8</div>
<div class="t" style="top:572.08px;font-size:12.8px;color:#444;left:-351.2px;width:800px;text-align:center;">9</div>
<div class="t" style="top:597.08px;font-size:12.8px;color:#444;left:-351.2px;width:800px;text-align:center;">10</div>
<div class="t" style="top:622.08px;font-size:12.8px;color:#444;left:-351.2px;width:800px;text-align:center;">11</div>
<div class="t" style="top:647.08px;font-size:12.8px;color:#444;left:-351.2px;width:800px;text-align:center;">12</div>
<div class="t" style="top:672.08px;font-size:12.8px;color:#444;left:-351.2px;width:800px;text-align:center;">13</div>
<div class="t" style="top:697.08px;font-size:12.8px;color:#444;left:-351.2px;width:800px;text-align:center;">14</div>
<div class="t" style="top:722.08px;font-size:12.8px;color:#444;left:-351.2px;width:800px;text-align:center;">15</div>
<div class="t" style="top:747.08px;font-size:12.8px;color:#444;left:-351.2px;width:800px;text-align:center;">16</div>
<div class="t" style="top:772.08px;font-size:12.8px;color:#444;left:-351.2px;width:800px;text-align:center;">17</div>
<div class="t" style="top:282.61px;font-size:17px;color:#000;left:-112px;width:800px;text-align:center;transform:scaleX(1.0);">Sale of goods by month, kg</div>
<div class="t" style="top:324.61px;font-size:17px;color:#000;font-weight:bold;font-style:italic;letter-spacing:-0.25px;left:-258px;width:800px;text-align:center;">Name of product</div>
<div class="t" style="top:324.61px;font-size:17px;color:#000;font-weight:bold;font-style:italic;letter-spacing:-0.2px;left:-127px;width:800px;text-align:center;">January</div>
<div class="t" style="top:324.61px;font-size:17px;color:#000;font-weight:bold;font-style:italic;letter-spacing:-0.2px;left:-31px;width:800px;text-align:center;">February</div>
<div class="t" style="top:324.61px;font-size:17px;color:#000;font-weight:bold;font-style:italic;letter-spacing:-0.2px;left:65px;width:800px;text-align:center;">March</div>
<div class="t" style="top:324.61px;font-size:17px;color:#000;font-weight:bold;font-style:italic;letter-spacing:-0.2px;left:190px;width:800px;text-align:center;">Total</div>
<div class="t" style="top:366.71px;font-size:17px;color:#000;letter-spacing:0.2px;left:65px;">Milk chocolate</div>
<div class="t" style="top:366.71px;font-size:17px;color:#000;left:-126px;width:800px;text-align:center;">48</div>
<div class="t" style="top:366.71px;font-size:17px;color:#000;left:-30px;width:800px;text-align:center;">10</div>
<div class="t" style="top:366.71px;font-size:17px;color:#000;left:66px;width:800px;text-align:center;">50</div>
<div class="t" style="top:366.71px;font-size:17px;color:#000;left:191px;width:800px;text-align:center;">108</div>
<div class="t" style="top:391.91px;font-size:17px;color:#000;letter-spacing:0.2px;left:65px;">Dark chocolate</div>
<div class="t" style="top:391.91px;font-size:17px;color:#000;left:-126px;width:800px;text-align:center;">30</div>
<div class="t" style="top:391.91px;font-size:17px;color:#000;left:-30px;width:800px;text-align:center;">45</div>
<div class="t" style="top:391.91px;font-size:17px;color:#000;left:66px;width:800px;text-align:center;">35</div>
<div class="t" style="top:416.71px;font-size:17px;color:#000;letter-spacing:0.2px;left:65px;">Milk chocolate with</div>
<div class="t" style="top:441.71px;font-size:17px;color:#000;letter-spacing:0.2px;left:65px;">whole hazelnuts</div>
<div class="t" style="top:429.21px;font-size:17px;color:#000;left:-126px;width:800px;text-align:center;">54</div>
<div class="t" style="top:429.21px;font-size:17px;color:#000;left:-30px;width:800px;text-align:center;">12</div>
<div class="t" style="top:429.21px;font-size:17px;color:#000;left:66px;width:800px;text-align:center;">67</div>
<div class="t" style="top:429.21px;font-size:17px;color:#000;left:191px;width:800px;text-align:center;">133</div>
<div class="t" style="top:466.71px;font-size:17px;color:#000;letter-spacing:0.2px;left:65px;">Dark chocolate with</div>
<div class="t" style="top:491.71px;font-size:17px;color:#000;letter-spacing:0.2px;left:65px;">raisins</div>
<div class="t" style="top:479.21px;font-size:17px;color:#000;left:-126px;width:800px;text-align:center;">37</div>
<div class="t" style="top:479.21px;font-size:17px;color:#000;left:-30px;width:800px;text-align:center;">26</div>
<div class="t" style="top:479.21px;font-size:17px;color:#000;left:66px;width:800px;text-align:center;">48</div>
<div class="t" style="top:479.21px;font-size:17px;color:#000;left:191px;width:800px;text-align:center;">111</div>
<div class="t" style="top:516.41px;font-size:17px;color:#000;letter-spacing:0.2px;left:65px;">Jujube</div>
<div class="t" style="top:516.41px;font-size:17px;color:#000;left:-126px;width:800px;text-align:center;">261</div>
<div class="t" style="top:516.41px;font-size:17px;color:#000;left:-30px;width:800px;text-align:center;">143</div>
<div class="t" style="top:516.41px;font-size:17px;color:#000;left:66px;width:800px;text-align:center;">352</div>
<div class="t" style="left:546.5px;top:391.1px;font-size:17px;color:#000;letter-spacing:-0.35px">=<span style="color:#5b8def">B4</span>+<span style="color:#f0635c">C4</span>+<span style="color:#9c74dc">D4</span></div>
<!-- bottom -->
<div class="a" style="left:36px;top:785px;width:1366px;height:28px;background:#f4f4f4;"></div>
<div class="a" style="left:36px;top:785px;width:1345px;height:1px;background:#c6c6c6;"></div>
<div class="a" style="left:201px;top:785px;width:66px;height:24px;background:#fff;border-left:1px solid #c6c6c6;border-right:1px solid #c6c6c6;"></div>
<div class="a" style="left:201px;top:808px;width:66px;height:2px;background:#217346;"></div>
<div class="a" style="left:136px;top:789px;width:1px;height:20px;background:#c6c6c6;"></div>
<div class="a" style="left:331px;top:790px;width:1px;height:19px;background:#d0d0d0;"></div>
<div class="a" style="left:395px;top:790px;width:1px;height:19px;background:#d0d0d0;"></div>
<div class="t" style="top:792.91px;font-size:11.96px;color:#444;letter-spacing:-0.001px;left:149.4px;">Sheet1</div>
<div class="t" style="top:792.90px;font-size:12px;color:#217346;font-weight:bold;letter-spacing:0.23px;left:213.4px;">Sheet2</div>
<div class="t" style="top:792.91px;font-size:11.99px;color:#444;letter-spacing:0.0px;left:279.3px;">Sheet3</div>
<div class="t" style="top:792.91px;font-size:11.99px;color:#444;letter-spacing:0.0px;left:344.3px;">Sheet4</div>
<div class="a" style="left:36px;top:813px;width:1366px;height:21px;background:#217346;"></div>
<div class="t" style="top:819.16px;font-size:10.35px;color:#fff;letter-spacing:-0.6px;left:43.2px;">EDIT</div>
<div class="t" style="top:818.40px;font-size:10.79px;color:#d3e6da;letter-spacing:0.002px;left:1365.7px;">100%</div>
<div class="a" style="left:36px;top:834px;width:152px;height:1px;background:#3c4550;"></div>
<div class="a" style="left:36px;top:835px;width:152px;height:1px;background:#c5d0e0;"></div>
<div class="a" style="left:188px;top:834px;width:968px;height:1px;background:#080808;"></div>
<div class="a" style="left:188px;top:835px;width:968px;height:1px;background:#f4f4f8;"></div>
<div class="a" style="left:1156px;top:834px;width:246px;height:1px;background:#217346;"></div>
<div class="a" style="left:1156px;top:835px;width:246px;height:1px;background:#c5d0e0;"></div>
<div class="a" style="left:36px;top:836px;width:1366px;height:4px;background:#b3b3b3;"></div>
<div class="a" style="left:36px;top:836px;width:613px;height:4px;background:#f5692d;"></div>
<div class="a" style="left:36px;top:840px;width:1366px;height:33px;background:#e9e9e9;"></div>
<div class="t" style="left:1307px;top:847.2px;font-family:'Liberation Serif',serif;font-weight:bold;font-size:19px;letter-spacing:1.2px;color:#b3b3b3">07:32</div>
<svg width="1440" height="905"><path d="M67.5 795.5v6.5l-4-3.25z" fill="#c4c4c4"/><path d="M92.5 795.5v6.5l4-3.25z" fill="#c4c4c4"/><circle cx="436.5" cy="799" r="7" fill="none" stroke="#777" stroke-width="1.3"/><path d="M432.5 799h8M436.5 795v8" stroke="#777" stroke-width="1.5"/><rect x="855" y="794" width="2" height="2" fill="#999"/><rect x="855" y="798" width="2" height="2" fill="#999"/><rect x="855" y="802" width="2" height="2" fill="#999"/><rect x="872.5" y="792.5" width="508" height="14" fill="#fff" stroke="#b0b0b0" stroke-width="1"/><rect x="886" y="793" width="1.5" height="13" fill="#aaa"/><rect x="872.5" y="792.5" width="14" height="14" fill="#fff" stroke="#b5b5b5" stroke-width="1"/><path d="M877.5 799.5l4-3.5v7z" fill="#666"/><rect x="1366.5" y="792.5" width="14" height="14" fill="#fff" stroke="#b5b5b5" stroke-width="1"/><path d="M1375.5 799.5l-4-3.5v7z" fill="#666"/><rect x="1250" y="793" width="116" height="13" fill="#ececec"/><rect x="1384" y="259" width="15" height="526" fill="#f0f0f0"/><rect x="1384.5" y="259.5" width="14" height="14" fill="#fff" stroke="#b5b5b5" stroke-width="1"/><path d="M1391.5 264l-3.5 4h7z" fill="#666"/><rect x="1384.5" y="274.5" width="14" height="446" fill="#fff" stroke="#b5b5b5" stroke-width="1"/><rect x="1384.5" y="771.5" width="14" height="13" fill="#fff" stroke="#b5b5b5" stroke-width="1"/><path d="M1391.5 780l-3.5-4h7z" fill="#666"/><circle cx="99.5" cy="819.5" r="2.8" fill="#fff"/><rect x="99.5" y="819.5" width="10" height="10" fill="none" stroke="#fff" stroke-width="1"/><path d="M101 823h7M101 825.5h7M101 828h7M103 822v7M105.5 822v7" stroke="#fff" stroke-width="1"/><rect x="1122.5" y="817.5" width="12" height="12" fill="none" stroke="#fff" stroke-width="1"/><path d="M1122.5 821.5h12M1122.5 825.5h12M1126.5 817.5v12M1130.5 817.5v12" stroke="#fff" stroke-width="1"/><rect x="1160.5" y="817.5" width="13" height="12" fill="none" stroke="#fff" stroke-width="1"/><rect x="1163.5" y="819.5" width="7" height="8" fill="none" stroke="#fff" stroke-width="1"/><path d="M1165 821.8h4M1165 823.6h4M1165 825.4h4" stroke="#fff" stroke-width=".9"/><rect x="1198.5" y="817.5" width="13" height="12" fill="none" stroke="#fff" stroke-width="1"/><rect x="1199" y="818" width="3.3" height="7" fill="#e9efeb"/><rect x="1204.3" y="818" width="3" height="7" fill="#e9efeb"/><path d="M1229.5 824h5M1343 824h8M1347 820v8" stroke="#164f2f" stroke-width="1.6"/><path d="M1239 824h100" stroke="#e6efe9" stroke-width="1"/><path d="M1289.5 820v8" stroke="#fff" stroke-width="1.2"/><path d="M49.5 849.5v16.5l14.5-8.25z" fill="#9b9b9b"/><path d="M86 851a8 8 0 1 0 5.5-1.6" fill="none" stroke="#a3a3a3" stroke-width="2.6"/><path d="M93.5 846.5l-5 3.5 5 3z" fill="#a3a3a3"/><text x="90.3" y="861.3" text-anchor="middle" font-size="9" font-weight="bold" fill="#a3a3a3" font-family="Liberation Sans" letter-spacing="-0.5">10</text><path d="M115 849h9l5 5v11.7h-14z" fill="#a3a3a3"/><path d="M124 849v5h5" fill="#d6d6d6"/><path d="M118 857.5h8M118 860h8M118 862.5h8" stroke="#e9e9e9" stroke-width="1"/><path d="M144 854.5h4l6-5.5v17l-6-5.5h-4z" fill="#a3a3a3"/><path d="M156 854.5q2 3 0 6M158.8 852q3.5 5.5 0 11M161.8 849.5q5 8 0 16" fill="none" stroke="#a3a3a3" stroke-width="1.6"/><rect x="180.5" y="856.5" width="89" height="3" rx="1.5" fill="#7db6d6"/><rect x="268.5" y="852.5" width="10" height="10.5" fill="#d0d0d0" stroke="#a3a3a3" stroke-width="1"/><g fill="none" stroke="#b3b3b3" stroke-width="1.3" stroke-linecap="butt"><path d="M699.5 847.5v14.5h7.5"/><circle cx="713.5" cy="857.3" r="4.8"/><path d="M718.7 852.2v10"/><path d="M730.5 850.5q-1.5-3 -4.5-3q-4.5 0 -4.5 3.8q0 3 4.5 3.7q5 .8 5 4.2q0 3.8 -5 3.8q-3.5 0 -5-3"/><path d="M734.5 847.5v14.5M742.5 852.5l-7.5 5.5M737 856.5l6 5.5"/><circle cx="750" cy="857.3" r="4.8"/><path d="M757.3 847.5v14.5"/><circle cx="764" cy="857.3" r="4.8"/><path d="M769.2 852.2v10"/></g><g fill="none" stroke="#b3b3b3" stroke-width="1.2"><path d="M674 844.5h13l5 5v11l-5 5h-13l-5-5v-11z"/><path d="M675 849.5h11M678.5 849.5v16M683 849.5v13h5M669.5 852.5h5v5h-5M688 852h3.5v5h-3.5"/><path d="M676.5 867.5h9" stroke-width="1.5"/></g><circle cx="1289" cy="857.3" r="8.6" fill="none" stroke="#b8b8b8" stroke-width="2.4"/><path d="M1288.8 851v6.8l4.3 3.6" fill="none" stroke="#aaa" stroke-width="2"/><path d="M1376.3 856v-5.5h6.5M1385.5 850.5h6.5v5.5M1392 858.5v6h-6.5M1382.8 864.5h-6.5v-6" fill="none" stroke="#8e8e8e" stroke-width="2.6"/></svg>
<!-- man -->
<svg width="1440" height="905"><defs><clipPath id="mc"><rect x="0" y="0" width="1440" height="813"/></clipPath></defs><g clip-path="url(#mc)"><path d="M1261 782h75l-1 33h-73z" fill="#0d2540"/><path d="M1297 790l1 25h-6z" fill="#0a1d33"/><path d="M1238 771q-2 14 -1 24q1 9 5 15l3 3q1-7 2-13l2 5q2 2 4 0q2-10 1-22l-1-10z" fill="#f0c48c"/><path d="M1243 790q-2 7 0 14" stroke="#d8a56b" stroke-width="1.5" fill="none"/><path d="M1340 776l18 1q3 12 1 23q-2 8 -6 12q-2-3 -1-8l-2 6q-3 1-3-2l-2 -10q-1 4 -3 5q-1-8 -1-15z" fill="#f0c48c"/><path d="M1350 790q3 8 2 16M1355 788q2 8 1 16" stroke="#d8a56b" stroke-width=".8" fill="none"/><path d="M1238 768l18 2v4l-18-2z" fill="#f4f4f4"/><path d="M1341 774l21 1v4l-21-1z" fill="#f2f2f2"/><path d="M1343 773l12 2v3l-12-2z" fill="#7a5a3a"/><path d="M1283 613 L1253 635 Q1249 640 1248 650 L1244 700 L1238 769 L1256 771 L1256 784 Q1258 788 1264 788 L1336 787 Q1340 786 1340 780 L1340 776 L1363 776 L1369 740 L1372 710 Q1371 690 1366 670 L1360 648 Q1356 632 1349 630 L1318.5 610 Z" fill="#102e4e"/><path d="M1253 635 Q1249 640 1248 650 L1244 700 L1238 769 L1256 771 L1256 700 Q1255 660 1262 640 z" fill="#0c2743"/><path d="M1339.5 699 Q1339 725 1340 753 L1341.5 753 Q1342.5 725 1342.5 699 z" fill="#f4f6f8"/><path d="M1334.5 653 L1340 700 L1340 776" fill="none" stroke="#0a1f36" stroke-width="1" opacity=".7"/><path d="M1349 630 Q1340 638 1336 652" fill="none" stroke="#0a1f36" stroke-width="1" opacity=".6"/><path d="M1290 603 L1311 599 L1316 607 L1317 614 Q1300 622 1285 614 L1286 607 z" fill="#d8a56b"/><path d="M1281.5 614 L1290 607 Q1300 617 1317 606.5 L1321 612 L1294 655 L1283 677 z" fill="#f6f6f6"/><path d="M1282 628 L1290 621 L1296 640 L1294 655 L1283 677 z" fill="#e6e6e6"/><path d="M1300 622 L1312 618 L1294 655 z" fill="#e8e8e8"/><path d="M1290 621 L1299.5 619.5 L1301 627 L1296 633 L1296 650 L1284 678 L1282 660 L1292 633 L1289 627 z" fill="#e2231a"/><path d="M1299.5 619.5 L1301 627 L1296 633 z" fill="#b81a12"/><path d="M1282 660 L1284 678 L1285 662 z" fill="#b81a12"/><path d="M1281.5 614 L1269 632 L1276 640 L1283 679 z" fill="#102e4e"/><path d="M1269 632 L1283 679" fill="none" stroke="#0a1f36" stroke-width="1.1"/><path d="M1318.5 610 L1324 632 L1320 636 L1283 680 L1296 652 z" fill="#102e4e"/><path d="M1324 632 L1283.5 680 M1318.5 610 L1296 652" fill="none" stroke="#0a1f36" stroke-width="1.1"/><path d="M1283 680 L1283 770 Q1280 784 1262 788" fill="none" stroke="#0a1f36" stroke-width="1"/><circle cx="1288.2" cy="695.5" r="2.7" fill="#07182a"/><circle cx="1288.5" cy="716.2" r="2.7" fill="#07182a"/><circle cx="1288.8" cy="736" r="2.7" fill="#07182a"/><path d="M1276 570 Q1275 585 1279 596 Q1283 605 1288 607.5 Q1296 610 1303 607 Q1311 603 1315 595 L1317 585 Q1321 583 1321 578 Q1320 574 1317 576 L1318 560 Q1300 553 1278 562 z" fill="#f0c48c"/><path d="M1308 560 L1313 578 Q1313 596 1303 607 Q1311 603 1315 595 L1317 585 Q1321 583 1321 578 Q1320 574 1317 576 L1318 560 z" fill="#d8a56b" opacity=".55"/><path d="M1275.5 573 Q1273 556 1282 549 Q1292 545 1302 546.5 Q1313 548 1318 557 Q1321 566 1319.5 576 L1314 578.5 Q1312 565 1304 562.5 Q1292 562 1283 565 Q1278 567 1277.5 573 z" fill="#5b3519"/><path d="M1283 553 Q1296 547 1310 553" stroke="#7b4c27" stroke-width="1.5" fill="none"/><path d="M1278 575 Q1283 573 1288.5 575M1294 574 Q1300 572 1307 574" stroke="#4a2c16" stroke-width="1.6" fill="none"/><ellipse cx="1283.7" cy="578.6" rx="3.2" ry="1.4" fill="#fff"/><circle cx="1284" cy="578.6" r="1.3" fill="#3a2a20"/><ellipse cx="1299.6" cy="578.4" rx="3.4" ry="1.4" fill="#fff"/><circle cx="1299.6" cy="578.4" r="1.3" fill="#3a2a20"/><path d="M1291 581 L1288 589 Q1290 591 1293 589" stroke="#d8a56b" stroke-width="1.1" fill="none"/><path d="M1284.5 595.5 Q1291.5 596.5 1299 595 Q1297 601 1292 601 Q1287 601 1284.5 595.5 z" fill="#a04a2e"/><path d="M1285.5 595.8 Q1291.5 596.8 1298 595.5 V597 Q1291.5 598 1285.5 597 z" fill="#f6f0ea"/><path d="M1287 606 Q1296 608 1304 604" stroke="#d8a56b" stroke-width="1.2" fill="none"/></g></svg>
</body></html>
